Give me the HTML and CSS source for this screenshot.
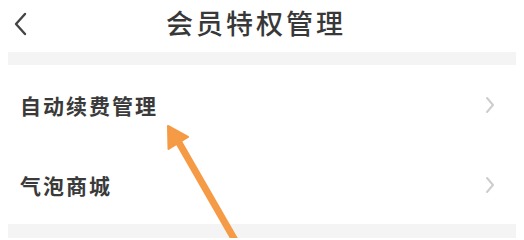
FILE: index.html
```html
<!DOCTYPE html>
<html lang="zh-CN">
<head>
<meta charset="utf-8">
<title>会员特权管理</title>
<link rel="stylesheet" href="styles.css">
</head>
<body>
<div class="page">
  <header class="topbar">
    <span class="back">
      <svg width="14" height="24" viewBox="0 0 14 24"><path d="M12 2 L3 12 L12 22" fill="none" stroke="#444" stroke-width="2.4" stroke-linecap="round" stroke-linejoin="round"/></svg>
    </span>
    <h1 class="title">会员特权管理</h1>
    <span class="spacer"></span>
  </header>
  <div class="band"></div>
  <ul class="list">
    <li class="row row-first">
      <span class="label">自动续费管理</span>
      <svg class="chev" width="10" height="18" viewBox="0 0 10 18"><path d="M2 2 L8 9 L2 16" fill="none" stroke="#cdcdcd" stroke-width="2" stroke-linecap="round" stroke-linejoin="round"/></svg>
    </li>
    <li class="row">
      <span class="label">气泡商城</span>
      <svg class="chev" width="10" height="18" viewBox="0 0 10 18"><path d="M2 2 L8 9 L2 16" fill="none" stroke="#cdcdcd" stroke-width="2" stroke-linecap="round" stroke-linejoin="round"/></svg>
    </li>
  </ul>
  <div class="band band-bottom"></div>
</div>
<svg class="arrow" width="524" height="238" viewBox="0 0 524 238">
  <line x1="178" y1="141" x2="236" y2="242" stroke="#f59a45" stroke-width="7" stroke-linecap="round"/>
  <polygon points="168,126 188,137 168.5,149" fill="#f59a45" stroke="#f59a45" stroke-width="2" stroke-linejoin="round"/>
</svg>
</body>
</html>
```

FILE: styles.css
```css
html, body {
  margin: 0;
  padding: 0;
  background: #ffffff;
  width: 524px;
  height: 238px;
  overflow: hidden;
  font-family: "Noto Sans CJK SC", "Noto Sans", sans-serif;
}

.page {
  padding: 0 8px;
}

.topbar {
  display: grid;
  grid-template-columns: 40px 1fr 52px;
  align-items: center;
  height: 52px;
  padding-bottom: 7px;
  box-sizing: border-box;
}

.back {
  display: flex;
  align-items: center;
  padding-left: 5px;
  padding-top: 2px;
}

.title {
  margin: 0;
  text-align: center;
  font-size: 27px;
  font-weight: 500;
  letter-spacing: 3px;
  color: #383838;
  line-height: 1;
}

.band {
  height: 13px;
  background: #f4f4f4;
}

.band-bottom {
  height: 14px;
}

.list {
  list-style: none;
  margin: 0;
  padding: 0;
}

.row {
  display: flex;
  align-items: center;
  justify-content: space-between;
  height: 79px;
  padding: 0 21px 0 12px;
}

.row-first {
  height: 80px;
}

.label {
  font-size: 21px;
  font-weight: 700;
  letter-spacing: 2px;
  color: #3a3a3a;
}

.chev {
  display: block;
}

.arrow {
  position: absolute;
  left: 0;
  top: 0;
  pointer-events: none;
}
```
